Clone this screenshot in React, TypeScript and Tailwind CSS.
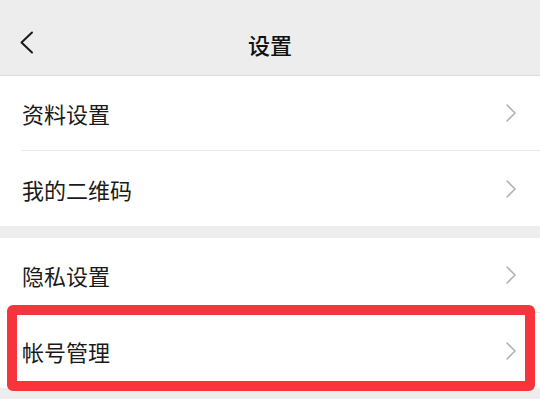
const font = { fontFamily: '"Noto Sans CJK SC", "Noto Sans", sans-serif' };

function Row({ label, divider }: { label: string; divider?: boolean }) {
  return (
    <div className="bg-white pl-[22px]">
      <div
        className={
          "h-[75px] flex items-center justify-between pr-[24px] " +
          (divider ? "border-b border-[#e6e6e6]" : "")
        }
      >
        <span className="text-[22px] text-[#1a1a1a] leading-none">{label}</span>
        <svg width="10" height="18" viewBox="0 0 10 18" fill="none">
          <path d="M1 1l8 8-8 8" stroke="#b3b3b3" strokeWidth="1.6" strokeLinecap="round" strokeLinejoin="round" />
        </svg>
      </div>
    </div>
  );
}

export default function App() {
  return (
    <div className="w-[540px] h-[408px] overflow-hidden bg-[#ededed]" style={font}>
      {/* Header */}
      <div className="h-[76px] relative flex items-center justify-center pt-[12px] border-b border-[#dcdcdc]">
        <button className="absolute left-[19px] top-[31px]">
          <svg width="15" height="23" viewBox="0 0 15 23" fill="none">
            <path d="M13 1.5L2.5 11.5 13 21.5" stroke="#1a1a1a" strokeWidth="2" strokeLinecap="round" strokeLinejoin="round" />
          </svg>
        </button>
        <h1 className="text-[22px] font-medium text-[#111] leading-none">设置</h1>
      </div>

      <Row label="资料设置" divider />
      <Row label="我的二维码" />

      <div className="h-[12px]" />

      <Row label="隐私设置" divider />
      <div className="relative">
        <Row label="帐号管理" />
        <div className="absolute left-[7px] right-[5px] top-[-8px] bottom-[-3px] border-[10px] border-[#f5343c] rounded-[6px] pointer-events-none" />
      </div>

      <div className="h-[11px]" />
      <div className="bg-white h-[20px]" />
    </div>
  );
}
